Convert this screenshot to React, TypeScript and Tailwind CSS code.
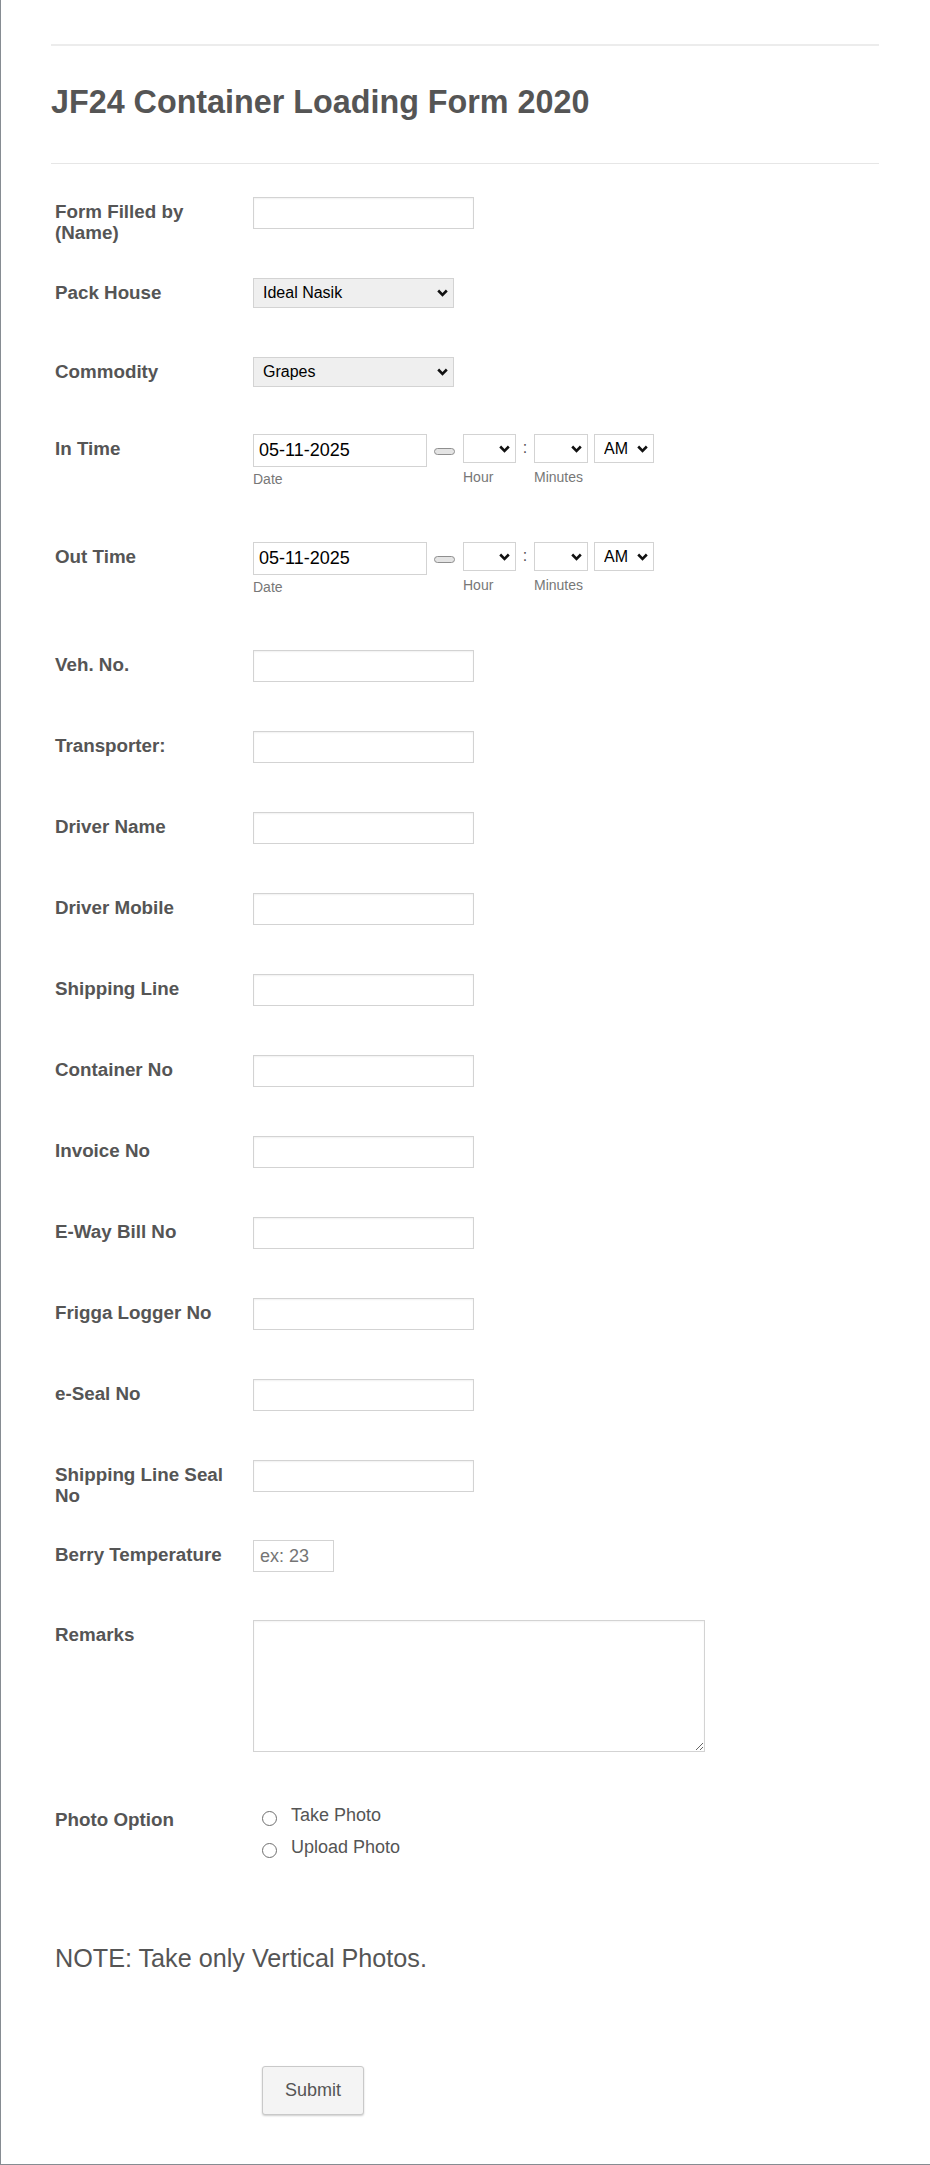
import type { ReactNode } from "react";

const textInput =
  "h-[32px] w-[221px] border border-[#d3d3d3] bg-white px-[6px] text-[18px] text-black shadow-[inset_0_1px_2px_rgba(0,0,0,0.06)] outline-none";

function Chevron() {
  return (
    <svg width="11" height="8" viewBox="0 0 11 8" className="pointer-events-none absolute top-1/2 -translate-y-1/2 right-[6px]">
      <path d="M1.2 1.5 5.5 5.8 9.8 1.5" fill="none" stroke="#111" strokeWidth="2.6" />
    </svg>
  );
}

function SelectBox({
  value,
  className,
}: {
  value: string;
  className: string;
}) {
  return (
    <div className="relative">
      <select
        defaultValue={value}
        className={`appearance-none border border-[#d3d3d3] pl-[9px] text-[16px] text-black outline-none ${className}`}
      >
        <option value={value}>{value}</option>
      </select>
      <Chevron />
    </div>
  );
}

function Row({
  label,
  h,
  children,
}: {
  label: string;
  h: string;
  children?: ReactNode;
}) {
  return (
    <div className={`flex ${h}`}>
      <label className="w-[198px] shrink-0 pt-[4px] pr-[17px] text-[18.8px] font-bold leading-[21px] text-[#555]">
        {label}
      </label>
      <div>{children}</div>
    </div>
  );
}

function DateTime() {
  return (
    <div className="flex items-start">
      <div className="flex flex-col">
        <input
          readOnly
          defaultValue="05-11-2025"
          className="h-[33px] w-[174px] border border-[#d3d3d3] bg-white pl-[5px] text-[18px] text-black outline-none"
        />
        <span className="mt-[4px] text-[14px] leading-[16px] text-[#777]">Date</span>
      </div>
      <span className="ml-[7px] mt-[14px] h-[7px] w-[21px] rounded-full border border-[#8f8f8f] bg-[#e4e4e4]" />
      <div className="ml-[8px] flex flex-col">
        <SelectBox value="" className="h-[29px] w-[53px] bg-white" />
        <span className="mt-[6px] text-[14px] leading-[16px] text-[#777]">Hour</span>
      </div>
      <span className="w-[18px] text-center text-[16px] leading-[27px] text-[#555]">:</span>
      <div className="flex flex-col">
        <SelectBox value="" className="h-[29px] w-[54px] bg-white" />
        <span className="mt-[6px] text-[14px] leading-[16px] text-[#777]">Minutes</span>
      </div>
      <div className="ml-[6px]">
        <SelectBox value="AM" className="h-[29px] w-[60px] bg-white" />
      </div>
    </div>
  );
}

function Radio({ label }: { label: string }) {
  return (
    <div className="flex h-[20px] items-start">
      <span className="ml-[9px] mt-[6px] h-[15px] w-[15px] rounded-full border border-[#6f6f6f] bg-white" />
      <span className="ml-[14px] text-[18px] leading-[20px] text-[#555]">{label}</span>
    </div>
  );
}

const plainRows: { label: string; h: string }[] = [
  { label: "Veh. No.", h: "h-[81px]" },
  { label: "Transporter:", h: "h-[81px]" },
  { label: "Driver Name", h: "h-[81px]" },
  { label: "Driver Mobile", h: "h-[81px]" },
  { label: "Shipping Line", h: "h-[81px]" },
  { label: "Container No", h: "h-[81px]" },
  { label: "Invoice No", h: "h-[81px]" },
  { label: "E-Way Bill No", h: "h-[81px]" },
  { label: "Frigga Logger No", h: "h-[81px]" },
  { label: "e-Seal No", h: "h-[81px]" },
  { label: "Shipping Line Seal No", h: "h-[80px]" },
];

export default function App() {
  return (
    <div className="h-[2165px] w-[930px] border-b border-l border-[#868c92] bg-white pt-[44px] pl-[50px] font-['Liberation_Sans',Arial,sans-serif]">
      <div className="w-[828px] border-t-2 border-[#ececec]" />
      <h1 className="mt-[38px] text-[32.3px] font-bold leading-[37px] text-[#555]">
        JF24 Container Loading Form 2020
      </h1>
      <div className="mt-[42px] w-[828px] border-t border-[#e6e6e6]" />

      <div className="mt-[33px] pl-[4px]">
        <Row label="Form Filled by (Name)" h="h-[81px]">
          <input className={textInput} />
        </Row>
        <Row label="Pack House" h="h-[79px]">
          <SelectBox value="Ideal Nasik" className="h-[30px] w-[201px] bg-[#efefef]" />
        </Row>
        <Row label="Commodity" h="h-[77px]">
          <SelectBox value="Grapes" className="h-[30px] w-[201px] bg-[#efefef]" />
        </Row>
        <Row label="In Time" h="h-[108px]">
          <DateTime />
        </Row>
        <Row label="Out Time" h="h-[108px]">
          <DateTime />
        </Row>
        {plainRows.map((r) => (
          <Row key={r.label} label={r.label} h={r.h}>
            <input className={textInput} />
          </Row>
        ))}
        <Row label="Berry Temperature" h="h-[80px]">
          <input
            placeholder="ex: 23"
            className="h-[32px] w-[81px] border border-[#d3d3d3] bg-white px-[6px] text-[18px] text-black outline-none placeholder:text-[#757575]"
          />
        </Row>
        <Row label="Remarks" h="h-[185px]">
          <textarea className="h-[132px] w-[452px] border border-[#d3d3d3] bg-white shadow-[inset_0_1px_2px_rgba(0,0,0,0.05)] outline-none" />
        </Row>
        <Row label="Photo Option" h="h-[138px]">
          <div className="flex flex-col gap-[12px]">
            <Radio label="Take Photo" />
            <Radio label="Upload Photo" />
          </div>
        </Row>
        <p className="h-[123px] text-[25.2px] leading-[30px] text-[#555]">
          NOTE: Take only Vertical Photos.
        </p>
      </div>

      <button className="ml-[211px] h-[49px] w-[102px] rounded-[3px] border border-[#c9c9c9] bg-[#f4f4f4] text-[18px] text-[#555] shadow-[0_1px_2px_rgba(0,0,0,0.2)]">
        Submit
      </button>
    </div>
  );
}
